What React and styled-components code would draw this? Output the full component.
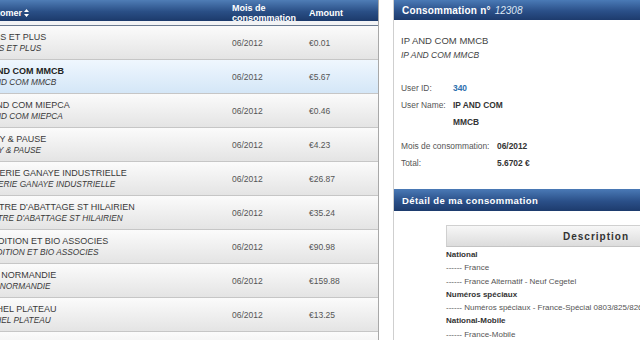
import React from 'react';
import styled, { createGlobalStyle } from 'styled-components';

const Global = createGlobalStyle`
  html, body { margin: 0; padding: 0; background: #fff; overflow: hidden; }
  body { font-family: "Liberation Sans", Arial, sans-serif; }
`;

const Page = styled.div`
  width: 640px;
  height: 340px;
  overflow: hidden;
  display: flex;
  align-items: flex-start;
  background: #fff;
`;

/* ---------- left list ---------- */
const ListPanel = styled.section`
  flex: 0 0 405px;
  box-sizing: border-box;
  margin-left: -26px;
  height: 340px;
  border-right: 1px solid #a8a8a8;
  display: flex;
  flex-direction: column;
`;

const cols = '252px 77px 1fr';

const HeadWrap = styled.div`
  padding-bottom: 4px;
  background: #f2f3f5;
  border-bottom: 1px solid #6a7a90;
`;

const GridHead = styled.div`
  display: grid;
  grid-template-columns: ${cols};
  height: 21px;
  align-items: center;
  background: linear-gradient(#4f7db6, #2a4f86 55%, #1c3a6b);
  color: #fff;
  font-weight: bold;
  font-size: 9px;
  line-height: 10px;
`;

const HeadCell = styled.div`
  padding: 3px 6px 0;
  white-space: nowrap;
  display: flex;
  align-items: flex-end;
  gap: 2px;
`;

const Row = styled.div`
  display: grid;
  grid-template-columns: ${cols};
  height: 33px;
  flex: 0 0 33px;
  align-items: center;
  border-bottom: 1px solid #c6c6c6;
  background: ${(p) =>
    p.$selected
      ? 'linear-gradient(#eff7fe, #d4e6f7)'
      : 'linear-gradient(#fbfbfb, #e4e4e4)'};
  color: #363636;
`;

const NameCell = styled.div`
  padding: 0 6px;
  white-space: nowrap;
  display: flex;
  flex-direction: column;
`;

const Main = styled.span`
  font-size: 9px;
  line-height: 11px;
  font-weight: ${(p) => (p.$bold ? 'bold' : 'normal')};
  color: ${(p) => (p.$bold ? '#222' : '#3a3a3a')};
`;

const Sub = styled.span`
  font-size: 8.3px;
  line-height: 11px;
  font-style: italic;
  color: #3a3a3a;
`;

const ValueCell = styled.div`
  padding: 0 6px;
  font-size: 8.5px;
  color: #555;
  white-space: nowrap;
`;

const SortIcon = () => (
  <svg width="5" height="8" viewBox="0 0 5 8" style={{ marginBottom: 1 }}>
    <path d="M2.5 0 L5 3 L0 3 Z M0 5 L5 5 L2.5 8 Z" fill="#fff" />
  </svg>
);

/* ---------- right detail ---------- */
const DetailPanel = styled.section`
  flex: 0 0 auto;
  width: 360px;
  margin-left: 14px;
  height: 340px;
  border-left: 1px solid #cfcfcf;
  display: flex;
  flex-direction: column;
`;

const PanelHead = styled.div`
  height: ${(p) => p.$h}px;
  flex: 0 0 ${(p) => p.$h}px;
  background: linear-gradient(#4a7ab6, #2b5089 55%, #1d3b6d);
  color: #fff;
  font-weight: bold;
  font-size: ${(p) => p.$size}px;
  letter-spacing: ${(p) => p.$ls}px;
  padding-left: 8px;
  display: flex;
  align-items: center;
  white-space: nowrap;
`;

const Number = styled.span`
  font-weight: normal;
  font-style: italic;
  color: #dde7f4;
  margin-left: 4px;
  letter-spacing: 0;
`;

const Summary = styled.div`
  padding: 14px 0 17px 7px;
  color: #444;
`;

const Title = styled.div`
  font-size: 9.5px;
  line-height: 14px;
`;

const SubTitle = styled.div`
  font-size: 8.5px;
  line-height: 14px;
  font-style: italic;
`;

const InfoGrid = styled.div`
  display: grid;
  grid-template-columns: ${(p) => p.$label}px ${(p) => p.$value}px;
  margin-top: ${(p) => p.$top}px;
  font-size: 8.4px;
  line-height: 17px;
`;

const Label = styled.div`
  color: #555;
`;

const Value = styled.div`
  font-weight: bold;
  color: ${(p) => (p.$blue ? '#2d6fae' : '#333')};
`;

const DescTable = styled.div`
  margin: 14px 0 0 52px;
  width: 300px;
`;

const DescHead = styled.div`
  height: 20px;
  border: 1px solid #d0d0d0;
  border-bottom-color: #c4c4c4;
  background: linear-gradient(#f7f7f7, #dcdcdc);
  display: flex;
  align-items: center;
  justify-content: center;
  font-weight: bold;
  font-size: 10px;
  letter-spacing: 1px;
  color: #333;
`;

const DescRow = styled.div`
  height: 13.3px;
  line-height: 13.3px;
  font-size: 8px;
  white-space: nowrap;
  font-weight: ${(p) => (p.$group ? 'bold' : 'normal')};
  color: ${(p) => (p.$group ? '#333' : '#555')};
`;

const DescBody = styled.div`
  padding-top: 1px;
`;

const rows = [
  ['PAINS ET PLUS', '0.01'],
  ['IP AND COM MMCB', '5.67', true],
  ['IP AND COM MIEPCA', '0.46'],
  ['BODY & PAUSE', '4.23'],
  ['TUILERIE GANAYE INDUSTRIELLE', '26.87'],
  ["CENTRE D'ABATTAGE ST HILAIRIEN", '35.24'],
  ['TRADITION ET BIO ASSOCIES', '90.98'],
  ['LAIT NORMANDIE', '159.88'],
  ['MICHEL PLATEAU', '13.25'],
  ['SARL DUPONT', '8.12'],
];

const desc = [
  ['National', true],
  ['------ France'],
  ['------ France Alternatif - Neuf Cegetel'],
  ['Numéros spéciaux', true],
  ['------ Numéros spéciaux - France-Spécial 0803/825/826'],
  ['National-Mobile', true],
  ['------ France-Mobile'],
];

export default function App() {
  return (
    <>
      <Global />
      <Page>
        <ListPanel>
          <HeadWrap>
            <GridHead>
              <HeadCell>
                Customer <SortIcon />
              </HeadCell>
              <HeadCell>
                Mois de
                <br />
                consommation <SortIcon />
              </HeadCell>
              <HeadCell>Amount</HeadCell>
            </GridHead>
          </HeadWrap>
          {rows.map(([name, amt, sel]) => (
            <Row key={name} $selected={sel}>
              <NameCell>
                <Main $bold={sel}>{name}</Main>
                <Sub>{name}</Sub>
              </NameCell>
              <ValueCell>06/2012</ValueCell>
              <ValueCell>€{amt}</ValueCell>
            </Row>
          ))}
        </ListPanel>

        <DetailPanel>
          <PanelHead $h={20} $size={10} $ls={0.2}>
            Consommation n°<Number>12308</Number>
          </PanelHead>
          <Summary>
            <Title>IP AND COM MMCB</Title>
            <SubTitle>IP AND COM MMCB</SubTitle>
            <InfoGrid $label={52} $value={62} $top={18}>
              <Label>User ID:</Label>
              <Value $blue>340</Value>
              <Label>User Name:</Label>
              <Value>IP AND COM MMCB</Value>
            </InfoGrid>
            <InfoGrid $label={96} $value={120} $top={7}>
              <Label>Mois de consommation:</Label>
              <Value>06/2012</Value>
              <Label>Total:</Label>
              <Value>5.6702 €</Value>
            </InfoGrid>
          </Summary>
          <PanelHead $h={22} $size={9.5} $ls={0.4}>
            Détail de ma consommation
          </PanelHead>
          <DescTable>
            <DescHead>Description</DescHead>
            <DescBody>
              {desc.map(([t, g]) => (
                <DescRow key={t} $group={g}>
                  {t}
                </DescRow>
              ))}
            </DescBody>
          </DescTable>
        </DetailPanel>
      </Page>
    </>
  );
}
